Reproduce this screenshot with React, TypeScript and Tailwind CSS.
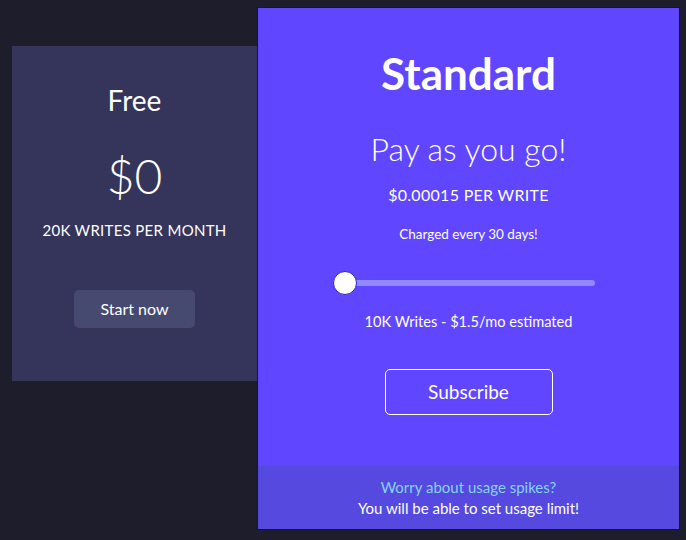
import React from "react";

export default function App() {
  const font = { fontFamily: "Lato, 'Noto Sans', sans-serif" };
  return (
    <div
      className="w-[686px] h-[540px] bg-[#1e1d2c] flex items-start pl-[12px] overflow-hidden text-white"
      style={font}
    >
      <div className="mt-[46px] w-[245px] h-[335px] bg-[#35345a] flex flex-col items-center">
        <div className="mt-[37px] text-[28px] leading-[34px]">Free</div>
        <div className="mt-[31px] text-[48px] leading-[56px] font-light">$0</div>
        <div className="mt-[16px] text-[15px] leading-[20px] tracking-[0.3px]">20K WRITES PER MONTH</div>
        <button className="mt-[50px] w-[121px] h-[38px] rounded-[5px] bg-[#474a70] text-[16px] text-white">
          Start now
        </button>
      </div>
      <div className="mt-[7px] w-[423px] h-[523px] border border-[#16152a] bg-[#6046fe] flex flex-col items-center">
        <div className="mt-[39px] text-[44px] leading-[52px] font-bold">Standard</div>
        <div className="mt-[28px] text-[32px] leading-[44px] font-light">Pay as you go!</div>
        <div className="mt-[13px] text-[16px] leading-[22px] tracking-[0.3px]">$0.00015 PER WRITE</div>
        <div className="mt-[18px] text-[13.5px] leading-[20px]">Charged every 30 days!</div>
        <div className="mt-[27px] mr-[10px] w-[262px] h-[24px] relative flex items-center">
          <div className="w-full h-[6px] rounded-full bg-[#9389ff]" />
          <div className="absolute left-0 top-0 w-[24px] h-[24px] rounded-full bg-white border-[1.5px] border-[#2b20c8]" />
        </div>
        <div className="mt-[17px] text-[14.6px] leading-[20px]">10K Writes - $1.5/mo estimated</div>
        <button className="mt-[37px] w-[168px] h-[46px] rounded-[5px] border border-white text-[19px] text-white">
          Subscribe
        </button>
        <div className="mt-auto w-full h-[63px] bg-[#5549e0] flex flex-col items-center justify-center text-[15px] leading-[21px]">
          <div className="text-[#86d3f5]">Worry about usage spikes?</div>
          <div>You will be able to set usage limit!</div>
        </div>
      </div>
    </div>
  );
}
